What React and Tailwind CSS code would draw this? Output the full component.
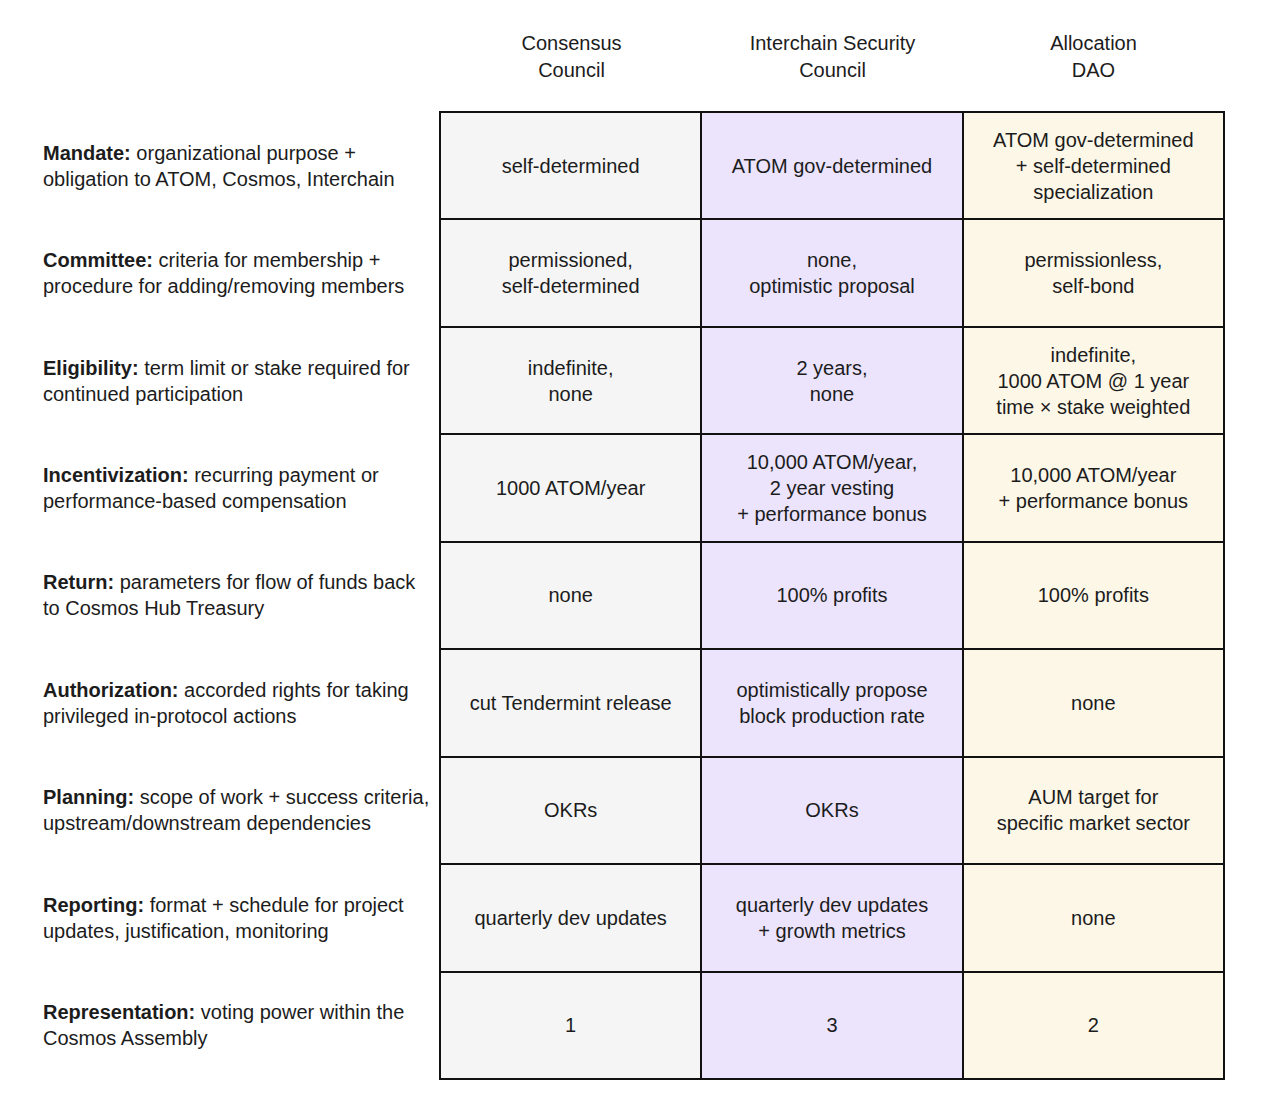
const columns = [
  { title: ["Consensus", "Council"], bg: "bg-[#f5f5f5]" },
  { title: ["Interchain Security", "Council"], bg: "bg-[#ebe4fc]" },
  { title: ["Allocation", "DAO"], bg: "bg-[#fdf7e8]" },
];

const rows = [
  {
    name: "Mandate:",
    desc: ["organizational purpose +", "obligation to ATOM, Cosmos, Interchain"],
    cells: [["self-determined"], ["ATOM gov-determined"], ["ATOM gov-determined", "+ self-determined", "specialization"]],
  },
  {
    name: "Committee:",
    desc: ["criteria for membership +", "procedure for adding/removing members"],
    cells: [["permissioned,", "self-determined"], ["none,", "optimistic proposal"], ["permissionless,", "self-bond"]],
  },
  {
    name: "Eligibility:",
    desc: ["term limit or stake required for", "continued participation"],
    cells: [["indefinite,", "none"], ["2 years,", "none"], ["indefinite,", "1000 ATOM @ 1 year", "time × stake weighted"]],
  },
  {
    name: "Incentivization:",
    desc: ["recurring payment or", "performance-based compensation"],
    cells: [["1000 ATOM/year"], ["10,000 ATOM/year,", "2 year vesting", "+ performance bonus"], ["10,000 ATOM/year", "+ performance bonus"]],
  },
  {
    name: "Return:",
    desc: ["parameters for flow of funds back", "to Cosmos Hub Treasury"],
    cells: [["none"], ["100% profits"], ["100% profits"]],
  },
  {
    name: "Authorization:",
    desc: ["accorded rights for taking", "privileged in-protocol actions"],
    cells: [["cut Tendermint release"], ["optimistically propose", "block production rate"], ["none"]],
  },
  {
    name: "Planning:",
    desc: ["scope of work + success criteria,", "upstream/downstream dependencies"],
    cells: [["OKRs"], ["OKRs"], ["AUM target for", "specific market sector"]],
  },
  {
    name: "Reporting:",
    desc: ["format + schedule for project", "updates, justification, monitoring"],
    cells: [["quarterly dev updates"], ["quarterly dev updates", "+ growth metrics"], ["none"]],
  },
  {
    name: "Representation:",
    desc: ["voting power within the", "Cosmos Assembly"],
    cells: [["1"], ["3"], ["2"]],
  },
];

function Lines({ lines }) {
  return lines.map((line, i) => (
    <span key={i} className="block">
      {line}
    </span>
  ));
}

export default function App() {
  return (
    <div className="w-[1280px] h-[1112px] bg-white text-[#1c1c1c] font-['Liberation_Sans',Arial,sans-serif] text-[20px] leading-[26px]">
      {/* Column headings */}
      <div className="flex h-[111px] pt-[30px] pl-[441px]">
        {columns.map((col) => (
          <div key={col.title[0]} className="w-[261px] text-center leading-[27px]">
            <Lines lines={col.title} />
          </div>
        ))}
      </div>

      <div className="flex">
        {/* Row labels */}
        <div className="w-[439px] h-[969px] pl-[43px] py-[2px] grid grid-rows-[repeat(9,1fr)] gap-[2px]">
          {rows.map((row) => (
            <div key={row.name} className="flex flex-col justify-center">
              <span className="block">
                <span className="font-semibold">{row.name}</span> {row.desc[0]}
              </span>
              <span className="block">{row.desc[1]}</span>
            </div>
          ))}
        </div>

        {/* Comparison grid */}
        <div className="w-[786px] h-[969px] bg-[#111] p-[2px] grid grid-cols-3 grid-rows-[repeat(9,1fr)] gap-[2px]">
          {rows.map((row) =>
            row.cells.map((cell, ci) => (
              <div
                key={row.name + ci}
                className={`${columns[ci].bg} flex flex-col items-center justify-center text-center`}
              >
                <Lines lines={cell} />
              </div>
            ))
          )}
        </div>
      </div>
    </div>
  );
}
